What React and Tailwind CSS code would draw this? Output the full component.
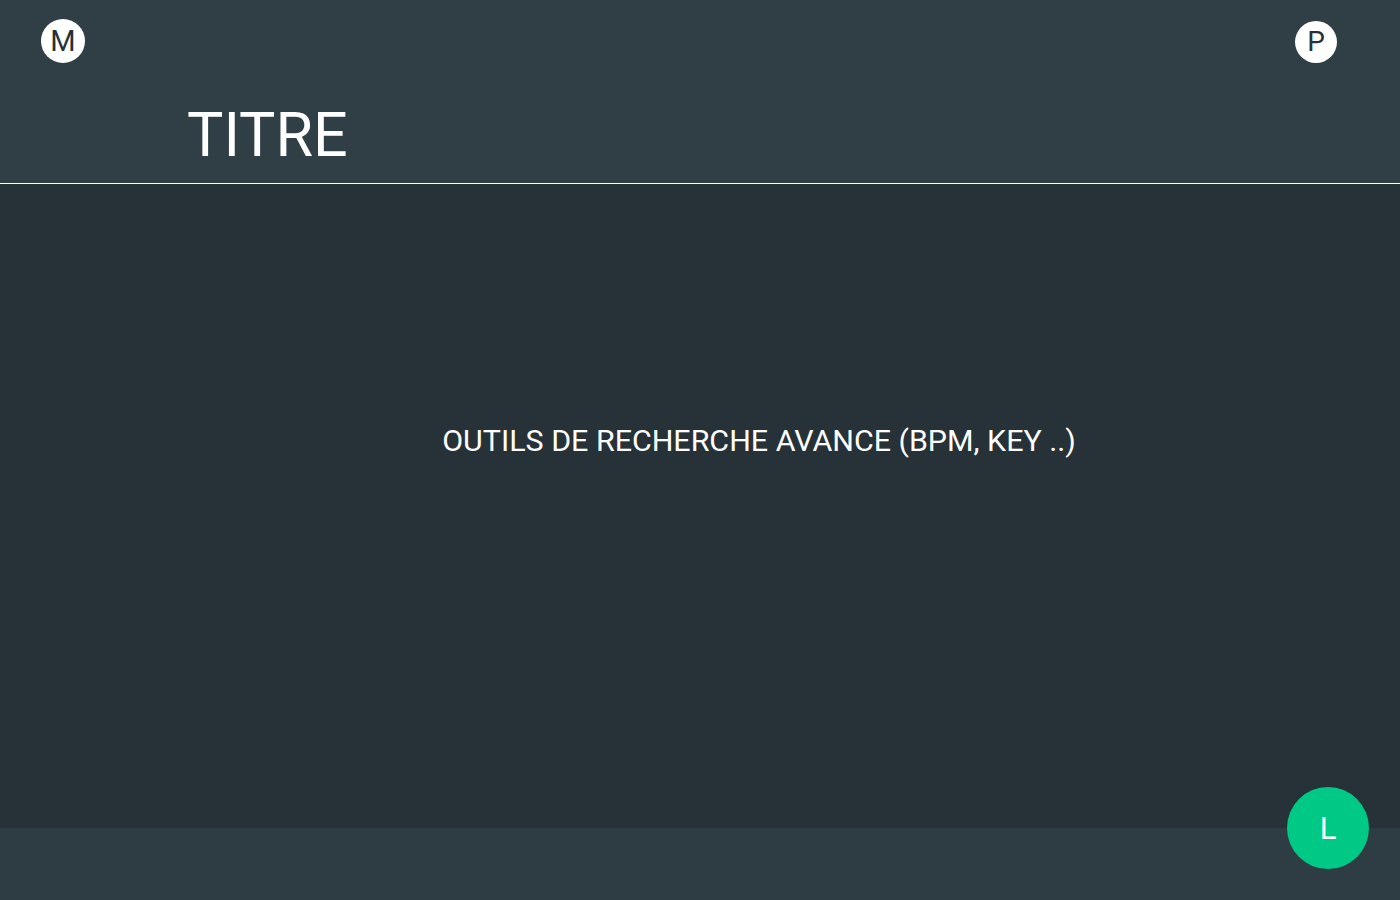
export default function App() {
    return (
        <div className="w-[1400px] h-[900px] flex flex-col bg-[#263238] font-['Roboto',sans-serif] text-white overflow-hidden">
            {/* Header */}
            <header className="h-[184px] shrink-0 bg-[#303e46] border-b border-white">
                <div className="flex justify-between items-start pt-[19px] pl-[41px] pr-[63px]">
                    <div className="w-[44px] h-[44px] rounded-full bg-white flex items-center justify-center text-[29px] leading-none text-[#263238]">
                        M
                    </div>
                    <div className="mt-[2px] w-[42px] h-[42px] rounded-full bg-white flex items-center justify-center text-[28px] leading-none text-[#263238]">
                        P
                    </div>
                </div>
                <h1 className="mt-[42px] pl-[187px] text-[61px] leading-[60px] font-normal">
                    TITRE
                </h1>
            </header>

            {/* Content */}
            <main className="h-[644px] shrink-0 flex justify-center pl-[118px] pt-[240px]">
                <p className="text-[30.4px] leading-[34px]">
                    OUTILS DE RECHERCHE AVANCE (BPM, KEY ..)
                </p>
            </main>

            {/* Footer */}
            <footer className="relative flex-1 bg-[#2e3c43]">
                <button className="absolute right-[31px] -top-[41px] w-[82px] h-[82px] rounded-full bg-[#00c985] flex items-center justify-center text-[31px] leading-none text-white">
                    L
                </button>
            </footer>
        </div>
    )
}
